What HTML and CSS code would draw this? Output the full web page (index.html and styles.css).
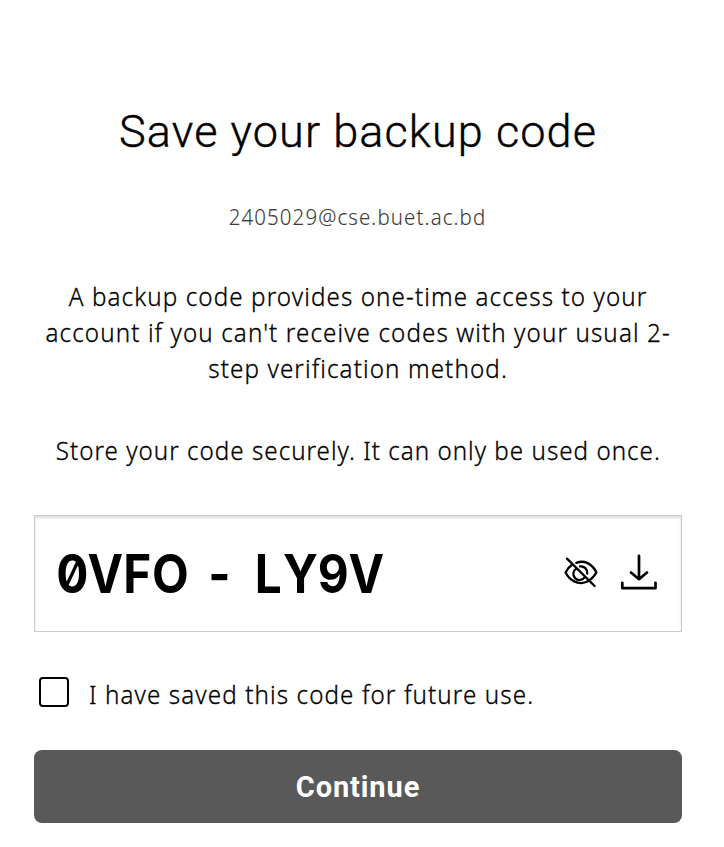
FILE: index.html
```html
<!DOCTYPE html>
<html lang="en">
<head>
<meta charset="utf-8">
<title>Save your backup code</title>
<link rel="stylesheet" href="styles.css">
</head>
<body>
<main class="panel">
  <h1 class="title"><span>Save your backup code</span></h1>
  <div class="email"><span class="narrow">2405029@cse.buet.ac.bd</span></div>
  <div class="copy">
    <div class="line"><span class="narrow">A backup code provides one-time access to your</span></div>
    <div class="line"><span class="narrow">account if you can't receive codes with your usual 2-</span></div>
    <div class="line"><span class="narrow">step verification method.</span></div>
  </div>
  <div class="copy note"><div class="line"><span class="narrow">Store your code securely. It can only be used once.</span></div></div>
  <section class="code-box">
    <div class="code"><span class="glyph zero">0</span><span class="glyph">V</span><span class="glyph">F</span><span class="glyph">O</span><span class="glyph dash">-</span><span class="glyph">L</span><span class="glyph">Y</span><span class="glyph">9</span><span class="glyph">V</span></div>
    <div class="actions">
      <svg class="eye" width="36" height="36" viewBox="0 0 36 36" fill="none" stroke="#000" stroke-width="2.3" stroke-linecap="round">
        <path d="M12.3 8.8C20 5.9 28 9.3 32.4 18.4C27 28 18 31.5 10 27.2"/>
        <path d="M8 10.8C5.2 12.8 3 15.5 1.6 18.4C3.6 22.4 6.5 25.4 10 27.2"/>
        <path d="M16 12.4A6.4 6.4 0 0 1 23.2 19.5"/>
        <path d="M12.2 14.6A6.2 6.2 0 1 0 20.6 23.4"/>
        <path d="M3 4.6L30.6 32"/>
      </svg>
      <svg class="download" width="38" height="38" viewBox="0 0 38 38" fill="none" stroke="#000" stroke-width="2.7" stroke-linecap="round" stroke-linejoin="round">
        <path d="M19 2.8V26.2M11 19.5L19 26.2L27 19.5M2.3 29.8V35.2H35.5V29.8"/>
      </svg>
    </div>
  </section>
  <label class="confirm"><input type="checkbox"><span class="narrow">I have saved this code for future use.</span></label>
  <button class="continue"><span>Continue</span></button>
</main>
</body>
</html>
```
FILE: styles.css
```css
* { box-sizing: border-box; }
body { margin: 0; background: #fff; color: #000; font-family: "Noto Sans", sans-serif; }
.panel { width: 648px; margin: 0 42px 0 34px; padding-top: 104px; display: flex; flex-direction: column; }
.title { margin: 0; height: 56px; text-align: center; font: 300 45px/56px Roboto, sans-serif; letter-spacing: 1.1px; -webkit-text-stroke: .4px #000; white-space: nowrap; }
.narrow { display: inline-block; flex: none; white-space: nowrap; transform: scaleX(.93); letter-spacing: 1.18px; -webkit-text-stroke: .3px currentColor; }
.line { display: flex; justify-content: center; }
.email { margin-top: 40px; text-align: center; font-size: 22px; line-height: 32px; font-weight: 300; color: #3c3c3c; }
.email .narrow { -webkit-text-stroke-width: .1px; }
.copy { margin-top: 46px; font-size: 26px; line-height: 36px; font-weight: 300; }
.note .narrow { letter-spacing: 1.08px; }
.code-box { margin-top: 47px; height: 117px; border: 1px solid #ccc; box-shadow: inset 0 2px 3px #0002; padding: 0 23px 0 22px; display: flex; align-items: center; justify-content: space-between; }
.code { display: flex; margin-left: -1px; font: 700 53px/60px Inter, sans-serif; font-feature-settings: "zero" 1; }
.glyph { width: 32.7px; display: flex; justify-content: center; transform: scaleX(.9); }
.dash { width: 65px; }
.actions { display: flex; gap: 20px; align-items: center; margin-top: -3px; }
.confirm { margin-top: 43px; height: 38px; display: flex; align-items: center; gap: 20px; padding-left: 5px; font-size: 26px; font-weight: 300; }
.confirm .narrow { transform-origin: left center; }
.confirm input { appearance: none; flex: none; width: 30px; height: 30px; margin: -5px 0 0; border: 2px solid #000; border-radius: 4px; }
.continue { margin-top: 37px; height: 73px; border: 0; border-radius: 8px; background: #595959; color: #fff; font: 700 29px Roboto, sans-serif; letter-spacing: .9px; }
```
